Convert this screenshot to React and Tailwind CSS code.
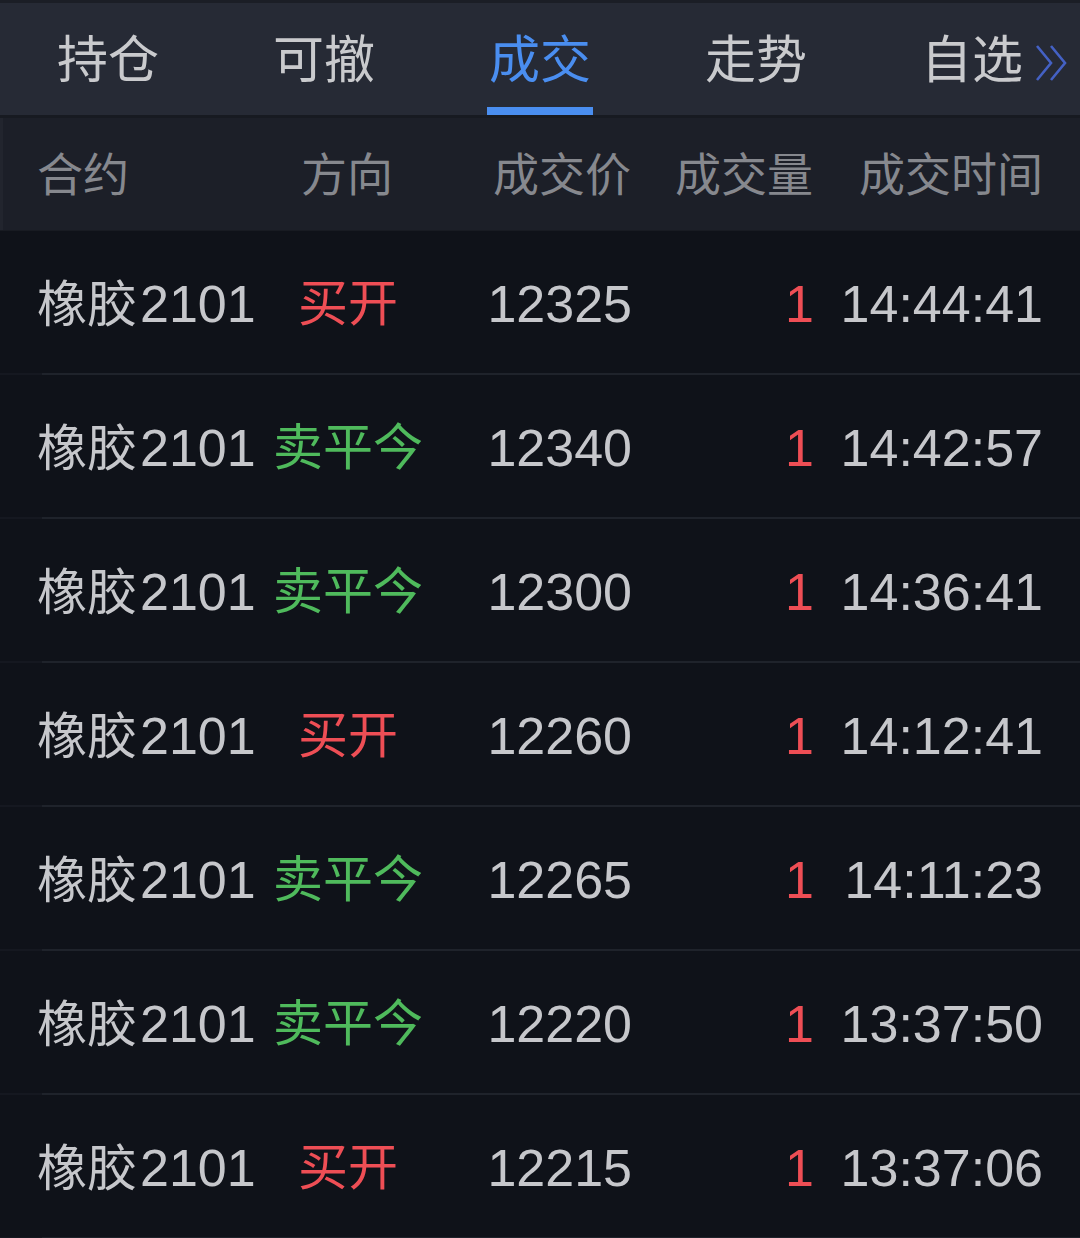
import React from "react";

const rows = [
  { dir: "买开", buy: true, price: "12325", time: "14:44:41" },
  { dir: "卖平今", buy: false, price: "12340", time: "14:42:57" },
  { dir: "卖平今", buy: false, price: "12300", time: "14:36:41" },
  { dir: "买开", buy: true, price: "12260", time: "14:12:41" },
  { dir: "卖平今", buy: false, price: "12265", time: "14:11:23" },
  { dir: "卖平今", buy: false, price: "12220", time: "13:37:50" },
  { dir: "买开", buy: true, price: "12215", time: "13:37:06" },
];

const tabs = ["持仓", "可撤", "成交", "走势", "自选"];

const font = { fontFamily: '"Liberation Sans", "Noto Sans CJK SC", sans-serif' };

export default function App() {
  return (
    <div
      className="w-[1080px] h-[1238px] bg-[#0f1219] overflow-hidden"
      style={font}
    >
      {/* Tab bar */}
      <div className="border-t-[3px] border-b-[3px] border-t-[#1b1e26] border-b-[#171a21] bg-[#262a35] h-[118px] grid grid-cols-5">
        {tabs.map((t, i) => (
          <div key={t} className="relative flex items-center justify-center pt-[2px]">
            <span
              className={
                "text-[51px] leading-none " +
                (i === 2 ? "text-[#4a8ef0]" : "text-[#c9cacd]")
              }
            >
              {t}
            </span>
            {i === 2 && (
              <div className="absolute bottom-0 left-1/2 -translate-x-1/2 w-[106px] h-[8px] bg-[#4a8ef0]" />
            )}
            {i === 4 && (
              <svg
                className="absolute right-[10px] top-[40px]"
                width="36"
                height="40"
                viewBox="0 0 36 40"
                fill="none"
                stroke="#4461c4"
                strokeWidth="2.6"
              >
                <polyline points="3,3 17,20 3,37" />
                <polyline points="17,3 31,20 17,37" />
              </svg>
            )}
          </div>
        ))}
      </div>

      {/* Header */}
      <div className="h-[112px] bg-[#1c1f28] border-l-[3px] border-[#22252e] grid grid-cols-[232px_156px_206px_182px_230px] pl-[34px] items-center pt-[2px] text-[46px] leading-none text-[#86888e]">
        <div>合约</div>
        <div className="text-center">方向</div>
        <div className="text-right">成交价</div>
        <div className="text-right">成交量</div>
        <div className="text-right">成交时间</div>
      </div>

      {/* Rows */}
      <div className="border-t border-[#181b22]">
        {rows.map((r, i) => (
          <div key={i} className="relative h-[144px]">
            <div className="h-[142px] pt-[4px] grid grid-cols-[233px_156px_206px_182px_229px] pl-[37px] items-center text-[50px] leading-none text-[#c6c7cb]">
              <div className="whitespace-nowrap">
                橡胶<span className="ml-[3px] text-[52px]">2101</span>
              </div>
              <div
                className={
                  "text-center " +
                  (r.buy ? "text-[#ee4e55]" : "text-[#4fba5c]")
                }
              >
                {r.dir}
              </div>
              <div className="text-right text-[52px]">{r.price}</div>
              <div className="text-right text-[52px] text-[#ee4e55]">1</div>
              <div className="text-right text-[52px]">{r.time}</div>
            </div>
            <div className="flex h-[2px]">
              <div className="w-[42px] bg-[#151820]" />
              <div className="flex-1 bg-[#1f232b]" />
            </div>
          </div>
        ))}
      </div>
    </div>
  );
}
